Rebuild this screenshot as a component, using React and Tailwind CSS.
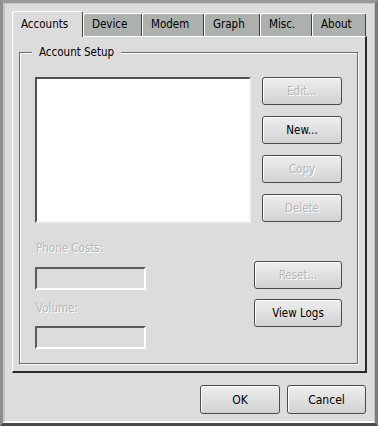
import clsx from "clsx";

const tabs = [
  { label: "Accounts", w: "w-[71px]", active: true },
  { label: "Device", w: "w-[59px]" },
  { label: "Modem", w: "w-[62px]" },
  { label: "Graph", w: "w-[56px]" },
  { label: "Misc.", w: "w-[52px]" },
  { label: "About", w: "w-[54px]" },
];

const etched = "text-[#b6b6b6] [text-shadow:1px_1px_0_#fff]";

function Btn({ children, disabled, className }) {
  return (
    <button
      className={clsx(
        "rounded-[3px] border border-[#4a4a4a] bg-gradient-to-b from-[#eeeeee] to-[#d2d2d2] shadow-[inset_1px_1px_0_#fff] leading-4",
        disabled ? etched : "text-black",
        className
      )}
    >
      {children}
    </button>
  );
}

function Field() {
  return (
    <div className="h-[23px] w-[111px] border-2 border-t-[#5c5c5c] border-l-[#5c5c5c] border-b-white border-r-white bg-[#dcdcdc]" />
  );
}

export default function App() {
  return (
    <div className="w-[378px] h-[426px] bg-[#dcdcdc] border-[3px] border-t-[#9a9a9a] border-l-[#8e8e8e] border-r-[#7a7a7a] border-b-[#4a4a4a] font-['DejaVu_Sans_Condensed','DejaVu_Sans',sans-serif] text-[11.5px] text-black">
      <div className="h-full flex flex-col border-l-2 border-t border-l-[#c4c4c4] border-t-[#c4c4c4] border-b-2 border-b-white border-r border-r-[#c4c4c4] pl-[7px] pr-[7px] pt-[7px]">
        {/* tab strip */}
        <div className="flex items-end h-[25px]">
          {tabs.map((t) =>
            t.active ? (
              <div
                key={t.label}
                className={clsx(
                  t.w,
                  "relative z-10 -mb-px h-[26px] bg-[#dcdcdc] border-l border-t border-white border-r border-r-[#404040] rounded-t-[3px] pl-[8px] pt-[4px] leading-4"
                )}
              >
                {t.label}
              </div>
            ) : (
              <div
                key={t.label}
                className={clsx(
                  t.w,
                  "h-[23px] bg-[#adb1ad] border-l border-t border-white border-r border-r-[#404040] rounded-t-[3px] pl-[8px] pt-[2px] leading-4"
                )}
              >
                {t.label}
              </div>
            )
          )}
        </div>

        {/* page */}
        <div className="h-[337px] border-l border-t border-white border-r-2 border-b-2 border-r-[#2a2a2a] border-b-[#2a2a2a] pl-[6px] pt-[15px]">
          <div className="w-[339px] h-[312px] border border-[#6a6a6a] shadow-[inset_1px_1px_0_#fff,1px_1px_0_#fff] px-[15px]">
            <div className="-mt-[9px] -ml-[3px] w-fit px-[7px] bg-[#dcdcdc] leading-4">
              Account Setup
            </div>

            <div className="mt-[17px] flex justify-between">
              <div className="w-[216px] h-[146px] bg-white border-2 border-t-[#505050] border-l-[#505050] border-b-[#f2f2f2] border-r-[#f2f2f2]" />
              <div className="flex flex-col gap-[11px]">
                <Btn disabled className="w-[80px] h-[28px]">Edit...</Btn>
                <Btn className="w-[80px] h-[28px]">New...</Btn>
                <Btn disabled className="w-[80px] h-[28px]">Copy</Btn>
                <Btn disabled className="w-[80px] h-[28px]">Delete</Btn>
              </div>
            </div>

            <div className="mt-[17px] flex justify-between">
              <div className="flex flex-col">
                <div className={clsx("leading-4 pl-px", etched)}>Phone Costs:</div>
                <div className="mt-[11px]">
                  <Field />
                </div>
                <div className={clsx("mt-[10px] leading-4 pl-px", etched)}>Volume:</div>
                <div className="mt-[10px]">
                  <Field />
                </div>
              </div>
              <div className="flex flex-col pt-[21px] gap-[10px]">
                <Btn disabled className="w-[88px] h-[28px]">Reset...</Btn>
                <Btn className="w-[88px] h-[28px]">View Logs</Btn>
              </div>
            </div>
          </div>
        </div>

        {/* dialog buttons */}
        <div className="mt-[12px] flex justify-end gap-[7px] pr-px">
          <Btn className="w-[80px] h-[29px] text-[12px]">OK</Btn>
          <Btn className="w-[79px] h-[29px] text-[12px]">Cancel</Btn>
        </div>
      </div>
    </div>
  );
}
